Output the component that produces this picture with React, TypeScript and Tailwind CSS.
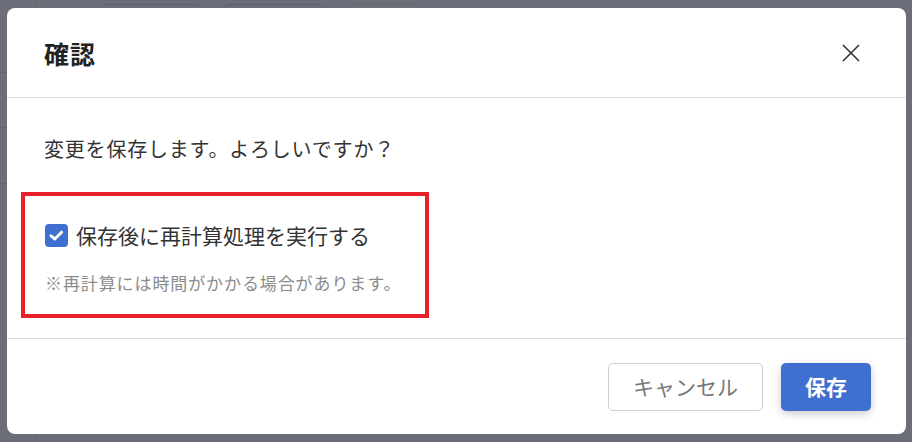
import React from "react";

const font = '"Noto Sans CJK JP", "Noto Sans", sans-serif';

export default function App() {
  return (
    <div className="relative w-[912px] h-[442px] overflow-hidden bg-[#6b6e78]" style={{ fontFamily: font }}>
      {/* underlying page (dimmed) */}
      <div className="flex h-full">
        <div className="w-[37px] h-full border-r border-[#63666f] flex flex-col">
          <div className="h-[73px] border-b border-[#63666f]" />
          <div className="h-[55px] border-b border-[#63666f]" />
          <div className="h-[56px] border-b border-[#63666f]" />
          <div className="flex-1" />
        </div>
        <div className="flex-1 flex gap-[20px] pl-[63px] pt-[4px]">
          <div className="w-[103px] h-[30px] rounded-[6px] border border-[#5d6374]" />
          <div className="w-[103px] h-[30px] rounded-[6px] border border-[#5d6374]" />
          <div className="w-[73px] h-[30px] rounded-[6px] border border-[#63666f]" />
        </div>
      </div>

      {/* modal overlay */}
      <div className="absolute inset-0 pl-[7px] pt-[8px]">
        <div className="w-[899px] h-[426px] bg-white rounded-[8px] flex flex-col">
          <div className="h-[90px] flex items-center justify-between pl-[37px] pr-[46px] border-b border-[#dcdcdc] shrink-0">
            <h2 className="text-[25px] font-bold text-[#222] leading-none pt-[2px] tracking-[1px]">確認</h2>
            <svg width="18" height="18" viewBox="0 0 18 18" className="mt-[1px]">
              <path d="M1 1 L17 17 M17 1 L1 17" stroke="#333" strokeWidth="1.6" fill="none" />
            </svg>
          </div>
          <div className="flex-1 pl-[14px] pt-[36px]">
            <p className="pl-[23px] text-[20px] tracking-[0.8px] text-[#333] leading-[30px]">変更を保存します。よろしいですか？</p>
            <div className="mt-[28px] w-[408px] h-[126px] border-[4px] border-[#e8202a] pl-[20px] pt-[25px]">
              <label className="flex items-center gap-[8px]">
                <span className="shrink-0 w-[23px] h-[23px] rounded-[4px] bg-[#3f6fd1] flex items-center justify-center">
                  <svg width="17" height="17" viewBox="0 0 17 17" className="shrink-0">
                    <path d="M3 8.8 L6.8 12 L13.6 5.2" stroke="#fff" strokeWidth="3" fill="none" strokeLinecap="round" strokeLinejoin="round" />
                  </svg>
                </span>
                <span className="text-[21px] text-[#333] leading-[28px]">保存後に再計算処理を実行する</span>
              </label>
              <p className="mt-[22px] text-[17px] tracking-[0.9px] text-[#8c8c8c] leading-[24px]">※再計算には時間がかかる場合があります。</p>
            </div>
          </div>
          <div className="h-[96px] border-t border-[#dcdcdc] flex items-start justify-end gap-[18px] pr-[35px] pt-[24px] shrink-0">
            <button className="w-[155px] h-[48px] rounded-[5px] border border-[#cfcfcf] bg-white text-[21px] text-[#777]">キャンセル</button>
            <button className="w-[90px] h-[48px] rounded-[5px] bg-[#3f6fcf] text-[21px] font-bold text-white shadow-[0_3px_8px_rgba(0,0,0,0.2)]">保存</button>
          </div>
        </div>
      </div>
    </div>
  );
}
